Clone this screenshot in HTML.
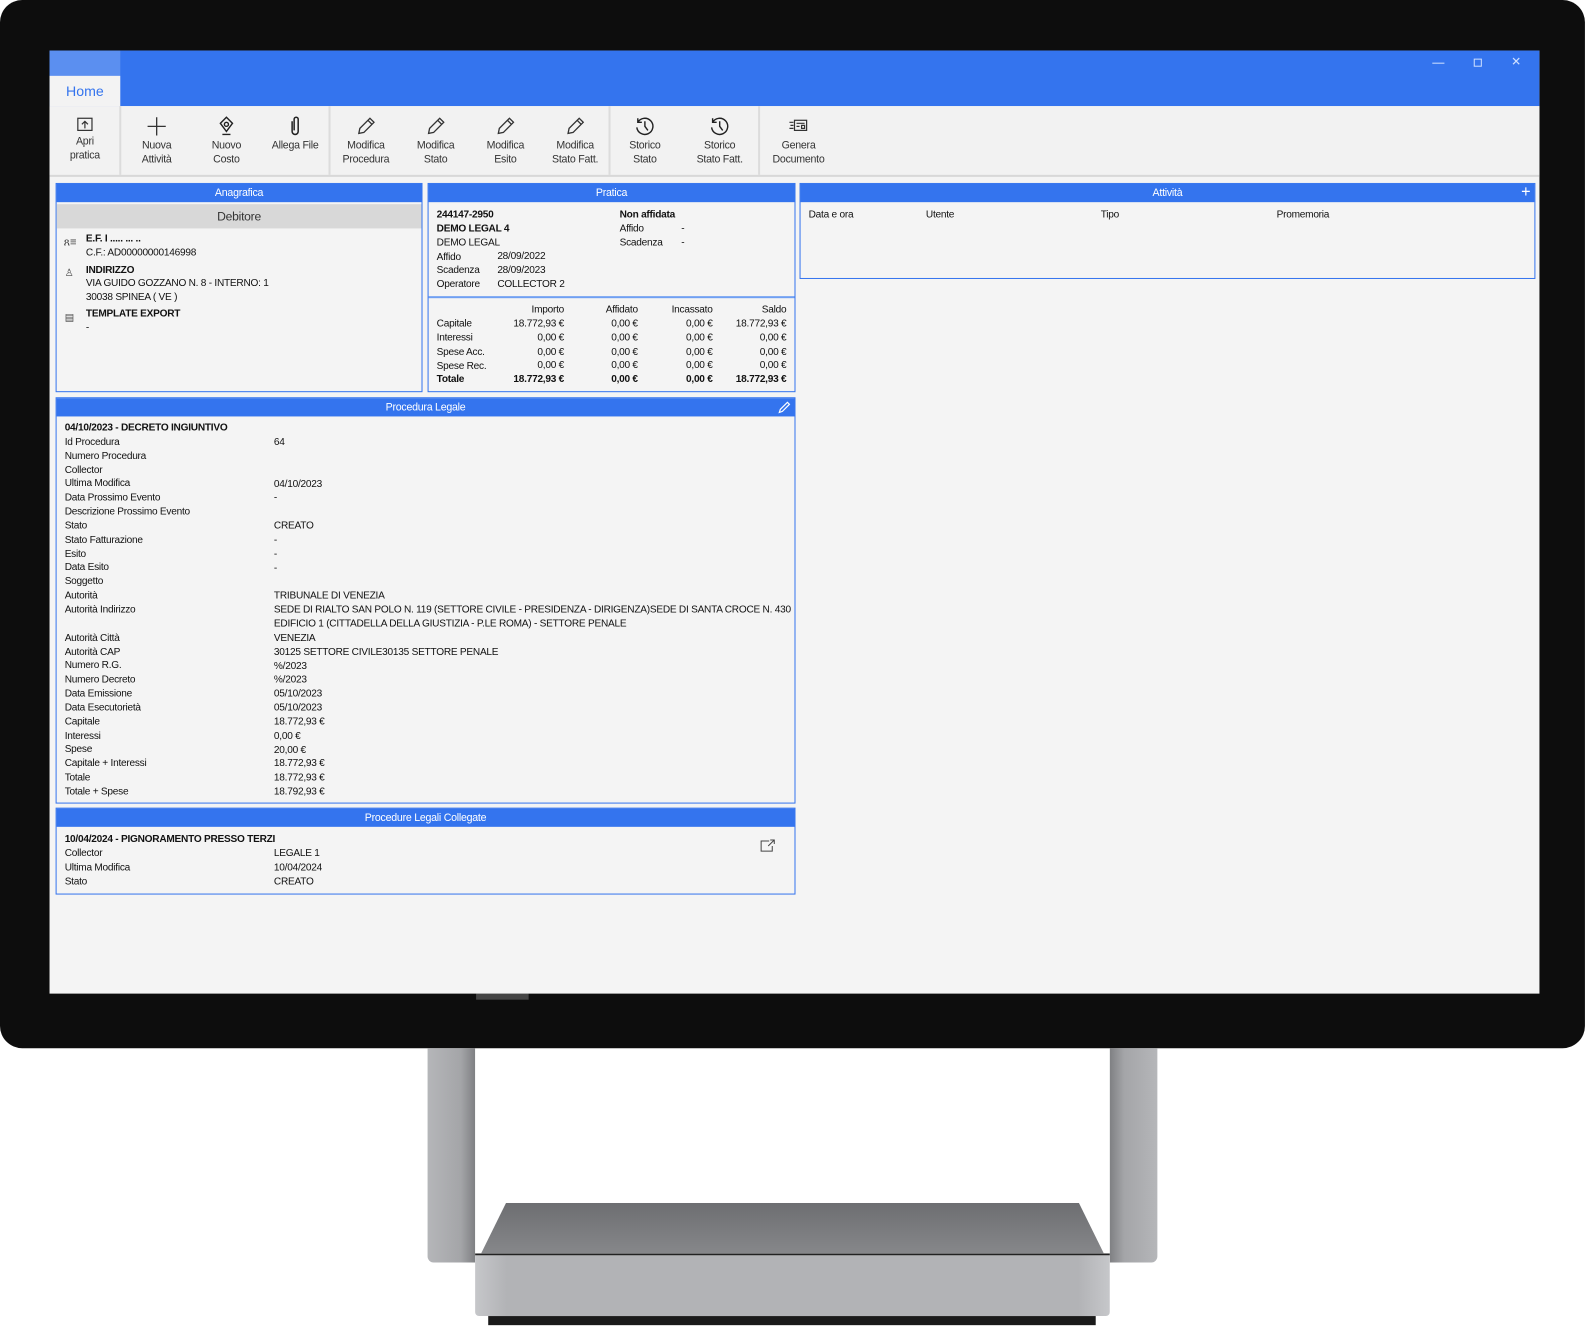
<!DOCTYPE html>
<html><head><meta charset="utf-8">
<style>
*{margin:0;padding:0;box-sizing:border-box}
body{width:1585px;height:1344px;background:#fff;position:relative;overflow:hidden;font-family:"Liberation Sans",sans-serif;font-size:10px;letter-spacing:-0.25px;color:#111}
#w{position:absolute;left:0;top:0;width:1568px;height:1330px;transform:scale(1.0108);transform-origin:0 0}
.a{position:absolute}
.mon{left:0;top:0;width:1568px;height:1037px;background:#0d0d0d;border-radius:22px}
.scr{left:49px;top:50px;width:1474px;height:933px;background:#f4f4f4;overflow:hidden}
.title{left:0;top:0;width:1474px;height:55px;background:#3474ee}
.home{left:0;top:25px;width:70px;height:30px;background:#f3f3f3;color:#3474ee;font-size:14px;text-align:center;line-height:30px;letter-spacing:0}
.tb{left:0;top:55px;width:1474px;height:70px;background:#f2f2f2;border-bottom:2px solid #d8d8d8}
.btn{position:absolute;top:0;height:68px;text-align:center;font-size:10.5px;line-height:13.5px;color:#333}
.btn svg{display:block;margin:9px auto 2px}
.sep{position:absolute;top:0;width:2px;height:68px;background:#dcdcdc}
.pan{position:absolute;border:1px solid #3474ee;background:#f4f4f4}
.hd{height:18px;background:#3474ee;color:#fff;text-align:center;line-height:18px;font-size:10.5px}
.r{position:absolute;white-space:nowrap;line-height:13.85px}
b{font-weight:bold}
.num{text-align:right}
</style></head><body>
<div id="w">
<div class="a mon"></div>
<div class="a" style="left:471px;top:983px;width:52px;height:6px;background:#444"></div>
<!-- stand -->
<div class="a" style="left:423px;top:1037px;width:47px;height:212px;background:linear-gradient(90deg,#b5b6b9,#a4a5a8 70%,#7f8083);border-radius:0 0 0 6px"></div>
<div class="a" style="left:1098px;top:1037px;width:47px;height:212px;background:linear-gradient(90deg,#7f8083,#a4a5a8 30%,#b5b6b9);border-radius:0 0 6px 0"></div>
<div class="a" style="left:476px;top:1190px;width:616px;height:50px;background:linear-gradient(#6d6e71,#86878a);clip-path:polygon(4% 0,96% 0,100% 100%,0 100%)"></div>
<div class="a" style="left:470px;top:1240px;width:628px;height:62px;background:linear-gradient(90deg,#c6c7ca,#b2b3b6 5%,#b2b3b6 95%,#c6c7ca);border-top:2px solid #222;border-radius:0 0 4px 4px"></div>
<div class="a" style="left:483px;top:1302px;width:601px;height:9px;background:#1a1a1a"></div>

<div class="a scr">
 <div class="a title"></div>
 <div class="a" style="left:0;top:0;width:70px;height:25px;background:#5b8ff0"></div>
 <div class="a" style="left:1368px;top:12px;width:12px;height:1px;background:#cfe0ff"></div>
 <div class="a" style="left:1409px;top:8px;width:8px;height:8px;border:1px solid #cfe0ff"></div>
 <div class="a" style="left:1446px;top:4px;color:#cfe0ff;font-size:12px;letter-spacing:0">✕</div>
 <div class="a home">Home</div>
 <div class="a tb">
  <div class="btn" style="left:5px;width:60px"><svg width="18" height="18" viewBox="0 0 18 18" fill="none" stroke="#333" stroke-width="1.2"><rect x="2" y="3" width="14" height="12"/><path d="M9 13V6M6 9l3-3 3 3"/></svg>Apri<br>pratica</div>
  <div class="sep" style="left:69px"></div>
  <div class="btn" style="left:76px;width:60px"><svg width="22" height="22" viewBox="0 0 22 22" stroke="#333" stroke-width="1.3"><path d="M11 2v18M2 11h18"/></svg>Nuova<br>Attività</div>
  <div class="btn" style="left:145px;width:60px"><svg width="18" height="22" viewBox="0 0 18 22" fill="none" stroke="#222" stroke-width="1.4"><path d="M9 2l6 6-6 8-6-8z"/><circle cx="9" cy="9" r="2"/><path d="M5 19h8"/></svg>Nuovo<br>Costo</div>
  <div class="btn" style="left:214px;width:58px"><svg width="14" height="22" viewBox="0 0 14 22" fill="none" stroke="#222" stroke-width="1.5"><path d="M4 6v10a3 3 0 006 0V4a2 2 0 00-4 0v11"/></svg>Allega File</div>
  <div class="sep" style="left:276px"></div>
  <div class="btn" style="left:282px;width:62px"><svg width="22" height="22" viewBox="0 0 22 22" fill="none" stroke="#333" stroke-width="1.3"><path d="M4 18l1-5L15 3l4 4L9 17z M13 5l4 4"/></svg>Modifica<br>Procedura</div>
  <div class="btn" style="left:351px;width:62px"><svg width="22" height="22" viewBox="0 0 22 22" fill="none" stroke="#333" stroke-width="1.3"><path d="M4 18l1-5L15 3l4 4L9 17z M13 5l4 4"/></svg>Modifica<br>Stato</div>
  <div class="btn" style="left:420px;width:62px"><svg width="22" height="22" viewBox="0 0 22 22" fill="none" stroke="#333" stroke-width="1.3"><path d="M4 18l1-5L15 3l4 4L9 17z M13 5l4 4"/></svg>Modifica<br>Esito</div>
  <div class="btn" style="left:488px;width:64px"><svg width="22" height="22" viewBox="0 0 22 22" fill="none" stroke="#333" stroke-width="1.3"><path d="M4 18l1-5L15 3l4 4L9 17z M13 5l4 4"/></svg>Modifica<br>Stato Fatt.</div>
  <div class="sep" style="left:553px"></div>
  <div class="btn" style="left:558px;width:62px"><svg width="22" height="22" viewBox="0 0 22 22" fill="none" stroke="#222" stroke-width="1.4"><path d="M4 7a8 8 0 11-1 5M4 3v4h4M11 6v5l3 4"/></svg>Storico<br>Stato</div>
  <div class="btn" style="left:630px;width:66px"><svg width="22" height="22" viewBox="0 0 22 22" fill="none" stroke="#222" stroke-width="1.4"><path d="M4 7a8 8 0 11-1 5M4 3v4h4M11 6v5l3 4"/></svg>Storico<br>Stato Fatt.</div>
  <div class="sep" style="left:701px"></div>
  <div class="btn" style="left:708px;width:66px"><svg width="22" height="22" viewBox="0 0 22 22" fill="none" stroke="#333" stroke-width="1.2"><rect x="7" y="5" width="12" height="10"/><path d="M2 7h4M3 10h3M2 13h4M9 8h8M9 11h3M14 10h3v3h-3z"/></svg>Genera<br>Documento</div>
 </div>
</div>

<!-- Anagrafica -->
<div class="pan" style="left:55px;top:181px;width:363px;height:207px">
 <div class="hd">Anagrafica</div>
 <div style="margin-top:2px;height:24px;background:#d8d8d8;text-align:center;line-height:24px;font-size:12px;color:#333">Debitore</div>
</div>
<div class="r" style="left:63px;top:234px;font-size:11px;color:#444">ጸ≡</div>
<div class="r" style="left:85px;top:230px"><b>E.F. I ..... ... ..</b></div>
<div class="r" style="left:85px;top:244px">C.F.: AD00000000146998</div>
<div class="r" style="left:64px;top:264px;color:#444">♙</div>
<div class="r" style="left:85px;top:261px"><b>INDIRIZZO</b></div>
<div class="r" style="left:85px;top:274px">VIA GUIDO GOZZANO N. 8 - INTERNO: 1</div>
<div class="r" style="left:85px;top:288px">30038 SPINEA ( VE )</div>
<div class="r" style="left:64px;top:308px;color:#444">▤</div>
<div class="r" style="left:85px;top:304px"><b>TEMPLATE EXPORT</b></div>
<div class="r" style="left:85px;top:318px">-</div>

<!-- Pratica -->
<div class="pan" style="left:423px;top:181px;width:364px;height:207px">
 <div class="hd">Pratica</div>
 <div style="position:absolute;left:0;top:111px;width:362px;height:2px;background:#6f9ff2"></div>
</div>
<div class="r" style="left:432px;top:206px"><b>244147-2950</b><br><b>DEMO LEGAL 4</b><br>DEMO LEGAL<br>Affido<br>Scadenza<br>Operatore</div>
<div class="r" style="left:492px;top:247px">28/09/2022<br>28/09/2023<br>COLLECTOR 2</div>
<div class="r" style="left:613px;top:206px"><b>Non affidata</b><br>Affido<br>Scadenza</div>
<div class="r" style="left:674px;top:220px">-<br>-</div>
<div class="r" style="left:432px;top:314px">Capitale<br>Interessi<br>Spese Acc.<br>Spese Rec.<br><b>Totale</b></div>
<div class="r num" style="left:490px;width:68px;top:300px">Importo<br>18.772,93 €<br>0,00 €<br>0,00 €<br>0,00 €<br><b>18.772,93 €</b></div>
<div class="r num" style="left:570px;width:61px;top:300px">Affidato<br>0,00 €<br>0,00 €<br>0,00 €<br>0,00 €<br><b>0,00 €</b></div>
<div class="r num" style="left:640px;width:65px;top:300px">Incassato<br>0,00 €<br>0,00 €<br>0,00 €<br>0,00 €<br><b>0,00 €</b></div>
<div class="r num" style="left:710px;width:68px;top:300px">Saldo<br>18.772,93 €<br>0,00 €<br>0,00 €<br>0,00 €<br><b>18.772,93 €</b></div>

<!-- Attivita -->
<div class="pan" style="left:791px;top:181px;width:728px;height:95px">
 <div class="hd">Attività</div>
 <div style="position:absolute;right:4px;top:0;color:#fff;font-size:16px;line-height:18px">+</div>
</div>
<div class="r" style="left:800px;top:206px">Data e ora</div>
<div class="r" style="left:916px;top:206px">Utente</div>
<div class="r" style="left:1089px;top:206px">Tipo</div>
<div class="r" style="left:1263px;top:206px">Promemoria</div>

<!-- Procedura Legale -->
<div class="pan" style="left:55px;top:393px;width:732px;height:402px">
 <div class="hd">Procedura Legale</div>
 <svg style="position:absolute;right:3px;top:2px" width="14" height="14" viewBox="0 0 14 14" fill="none" stroke="#fff" stroke-width="1.2"><path d="M2 12l1-3 7-7 2 2-7 7z"/></svg>
</div>
<div class="r" style="left:64px;top:417px"><b>04/10/2023 - DECRETO INGIUNTIVO</b><br>Id Procedura<br>Numero Procedura<br>Collector<br>Ultima Modifica<br>Data Prossimo Evento<br>Descrizione Prossimo Evento<br>Stato<br>Stato Fatturazione<br>Esito<br>Data Esito<br>Soggetto<br>Autorità<br>Autorità Indirizzo<br><br>Autorità Città<br>Autorità CAP<br>Numero R.G.<br>Numero Decreto<br>Data Emissione<br>Data Esecutorietà<br>Capitale<br>Interessi<br>Spese<br>Capitale + Interessi<br>Totale<br>Totale + Spese</div>
<div class="r" style="left:271px;top:431px">64<br><br><br>04/10/2023<br>-<br><br>CREATO<br>-<br>-<br>-<br><br>TRIBUNALE DI VENEZIA<br>SEDE DI RIALTO SAN POLO N. 119 (SETTORE CIVILE - PRESIDENZA - DIRIGENZA)SEDE DI SANTA CROCE N. 430<br>EDIFICIO 1 (CITTADELLA DELLA GIUSTIZIA - P.LE ROMA) - SETTORE PENALE<br>VENEZIA<br>30125 SETTORE CIVILE30135 SETTORE PENALE<br>%/2023<br>%/2023<br>05/10/2023<br>05/10/2023<br>18.772,93 €<br>0,00 €<br>20,00 €<br>18.772,93 €<br>18.772,93 €<br>18.792,93 €</div>

<!-- Collegate -->
<div class="pan" style="left:55px;top:799px;width:732px;height:86px">
 <div class="hd">Procedure Legali Collegate</div>
</div>
<svg class="a" style="left:752px;top:830px" width="15" height="13" viewBox="0 0 15 13" fill="none" stroke="#444" stroke-width="1"><path d="M9 2H1v10h11V7M8 7l6-6M10 1h4v4"/></svg>
<div class="r" style="left:64px;top:824px"><b>10/04/2024 - PIGNORAMENTO PRESSO TERZI</b><br>Collector<br>Ultima Modifica<br>Stato</div>
<div class="r" style="left:271px;top:838px">LEGALE 1<br>10/04/2024<br>CREATO</div>
</div>
</body></html>
